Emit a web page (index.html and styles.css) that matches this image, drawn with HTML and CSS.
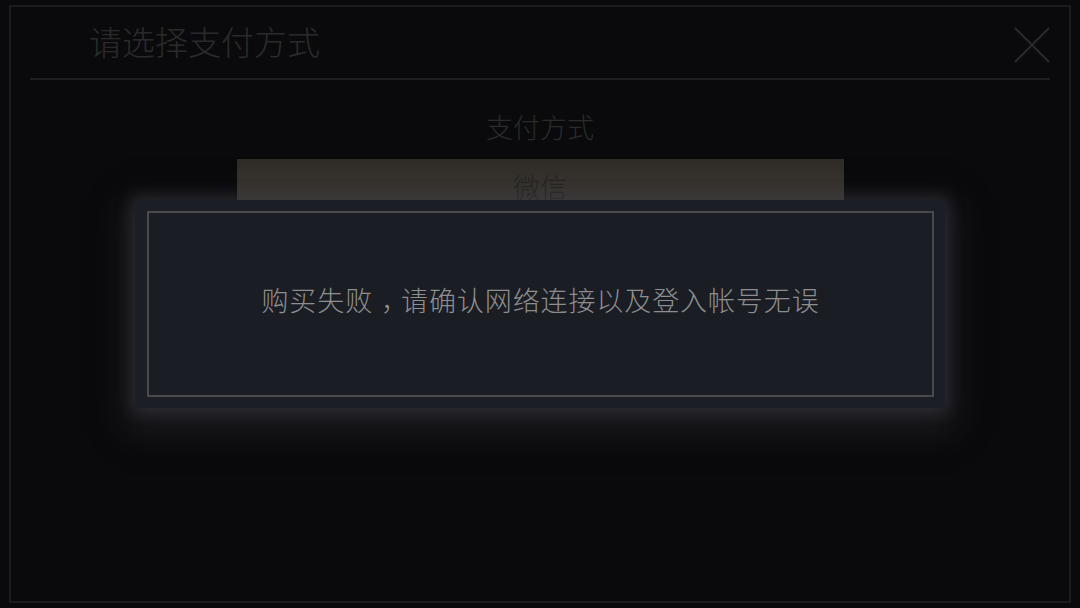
FILE: index.html
```html
<!DOCTYPE html>
<html lang="zh-CN">
<head>
<meta charset="utf-8">
<title>请选择支付方式</title>
<link rel="stylesheet" href="styles.css">
</head>
<body>
<div class="frame">
  <header class="header">
    <h1 class="title">请选择支付方式</h1>
    <button class="close" aria-label="关闭">
      <svg width="38" height="38" viewBox="0 0 38 38"><path d="M2 2 L36 36 M36 2 L2 36" stroke="#29292a" stroke-width="2.2" fill="none"/></svg>
    </button>
  </header>
  <main class="content">
    <div class="label">支付方式</div>
    <div class="option">微信</div>
  </main>
</div>
<div class="overlay">
  <div class="dialog">
    <p class="message">购买失败<span class="punct">，</span>请确认网络连接以及登入帐号无误</p>
  </div>
</div>
</body>
</html>
```
FILE: styles.css
```css
html, body {
  margin: 0;
  padding: 0;
  background: #0a0a0c;
  width: 1080px;
  height: 608px;
  overflow: hidden;
  font-family: "Noto Sans CJK SC", "Noto Sans", sans-serif;
}
.frame {
  box-sizing: border-box;
  margin: 5px 9px 0 9px;
  height: 598px;
  border: 2px solid #1b1b1d;
  display: flex;
  flex-direction: column;
}
.header {
  margin: 0 19px;
  height: 73px;
  border-bottom: 2px solid #202022;
  display: flex;
  align-items: center;
  justify-content: space-between;
  box-sizing: border-box;
}
.title {
  margin: 0 0 0 59px;
  font-weight: 300;
  font-size: 33px;
  line-height: 1;
  color: #2a2a2a;
  position: relative;
  top: -1px;
}
.close {
  background: none;
  border: 0;
  padding: 0;
  margin: 0 -1px 0 0;
  width: 38px;
  height: 38px;
  display: block;
  position: relative;
  top: 2px;
}
.close svg { display: block; }
.content {
  display: flex;
  flex-direction: column;
  align-items: center;
}
.label {
  margin-top: 30px;
  font-size: 27px;
  font-weight: 300;
  line-height: 34px;
  color: #2b2b2b;
}
.option {
  margin-top: 15px;
  width: 607px;
  height: 60px;
  box-sizing: border-box;
  padding-top: 11px;
  text-align: center;
  font-size: 27px;
  font-weight: 300;
  line-height: 34px;
  color: #262523;
  background: linear-gradient(#2f2b27, #45413b);
}
.overlay {
  position: absolute;
  inset: 0;
  display: flex;
  align-items: center;
  justify-content: center;
}
.dialog {
  width: 810px;
  height: 208px;
  box-sizing: border-box;
  padding: 11px 11px 11px 12px;
  background: #1b1e26;
  box-shadow: 0 0 14px 4px rgba(70, 70, 78, 0.4), 0 12px 30px 10px rgba(40, 40, 46, 0.65);
}
.message {
  margin: 0;
  box-sizing: border-box;
  height: 100%;
  border: 2px solid #4a4a4b;
  background: #1a1d24;
  display: flex;
  align-items: center;
  justify-content: center;
  font-size: 27px;
  font-weight: 300;
  color: #8e8e8e;
  letter-spacing: 0.9px;
  padding-bottom: 10px;
}
.punct {
  padding-left: 8px;
  letter-spacing: -7px;
}
```
